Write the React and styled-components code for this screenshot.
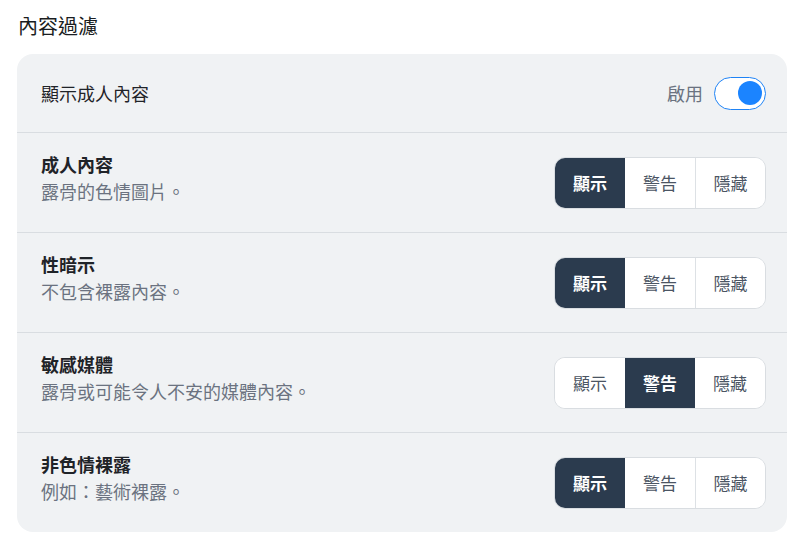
import React, { useState } from "react";
import styled, { createGlobalStyle } from "styled-components";

const GlobalStyle = createGlobalStyle`
  body {
    margin: 0;
    background: #ffffff;
    font-family: "Noto Sans CJK TC", "Noto Sans", sans-serif;
  }
`;

const Page = styled.div`
  width: 798px;
  padding: 12px 11px 0 17px;
  box-sizing: border-box;
`;

const Heading = styled.h2`
  margin: 0 0 14px 1px;
  font-size: 20px;
  line-height: 28px;
  font-weight: 400;
  color: #1a1d21;
`;

const Card = styled.div`
  background: #f0f2f4;
  border-radius: 16px;
  overflow: hidden;
`;

const Row = styled.div`
  display: flex;
  align-items: center;
  justify-content: space-between;
  height: ${p => (p.short ? "78px" : "99px")};
  padding: 0 21px 0 24px;
  border-top: ${p => (p.first ? "none" : "1px solid #d9dde1")};
`;

const Label = styled.div`
  font-size: 18px;
  color: #1f2328;
  font-weight: ${p => (p.bold ? 600 : 400)};
  line-height: 27px;
`;

const Texts = styled.div`
  display: flex;
  flex-direction: column;
  margin-top: -10px;
`;

const Sub = styled.div`
  font-size: 18px;
  line-height: 27px;
  color: #6b7280;
`;

const ToggleWrap = styled.div`
  display: flex;
  align-items: center;
  gap: 11px;
  font-size: 18px;
  color: #6b7280;
`;

const Toggle = styled.button`
  width: 52px;
  height: 33px;
  border-radius: 17px;
  border: 1.5px solid #1f83f5;
  background: #ffffff;
  padding: 0 3px;
  display: flex;
  align-items: center;
  justify-content: ${p => (p.on ? "flex-end" : "flex-start")};
  cursor: pointer;
  box-sizing: border-box;
`;

const Knob = styled.span`
  width: 24px;
  height: 24px;
  border-radius: 50%;
  background: #1b84ff;
`;

const Segmented = styled.div`
  display: flex;
  height: 52px;
  border: 1px solid #d9dde1;
  border-radius: 11px;
  overflow: hidden;
  background: #ffffff;
  box-sizing: border-box;
`;

const Seg = styled.button`
  width: 70px;
  border: none;
  border-left: ${p => (p.divider ? "1px solid #dde1e5" : "none")};
  background: ${p => (p.active ? "#2b3b4e" : "#ffffff")};
  color: ${p => (p.active ? "#ffffff" : "#4b5563")};
  font-family: inherit;
  font-size: 17px;
  font-weight: ${p => (p.active ? 700 : 400)};
  cursor: pointer;
`;

const options = ["顯示", "警告", "隱藏"];

const rows = [
  { title: "成人內容", sub: "露骨的色情圖片。", value: 0 },
  { title: "性暗示", sub: "不包含裸露內容。", value: 0 },
  { title: "敏感媒體", sub: "露骨或可能令人不安的媒體內容。", value: 1 },
  { title: "非色情裸露", sub: "例如：藝術裸露。", value: 0 },
];

function App() {
  const [enabled, setEnabled] = useState(true);
  const [values, setValues] = useState(rows.map(r => r.value));

  return (
    <Page>
      <GlobalStyle />
      <Heading>內容過濾</Heading>
      <Card>
        <Row short first>
          <Label>顯示成人內容</Label>
          <ToggleWrap>
            啟用
            <Toggle on={enabled ? 1 : 0} onClick={() => setEnabled(!enabled)}>
              <Knob />
            </Toggle>
          </ToggleWrap>
        </Row>
        {rows.map((r, i) => (
          <Row key={r.title}>
            <Texts>
              <Label bold>{r.title}</Label>
              <Sub>{r.sub}</Sub>
            </Texts>
            <Segmented>
              {options.map((o, j) => (
                <Seg
                  key={o}
                  active={values[i] === j}
                  divider={j > 0 && values[i] !== j && values[i] !== j - 1}
                  onClick={() => setValues(values.map((v, k) => (k === i ? j : v)))}
                >
                  {o}
                </Seg>
              ))}
            </Segmented>
          </Row>
        ))}
      </Card>
    </Page>
  );
}

export default App;
